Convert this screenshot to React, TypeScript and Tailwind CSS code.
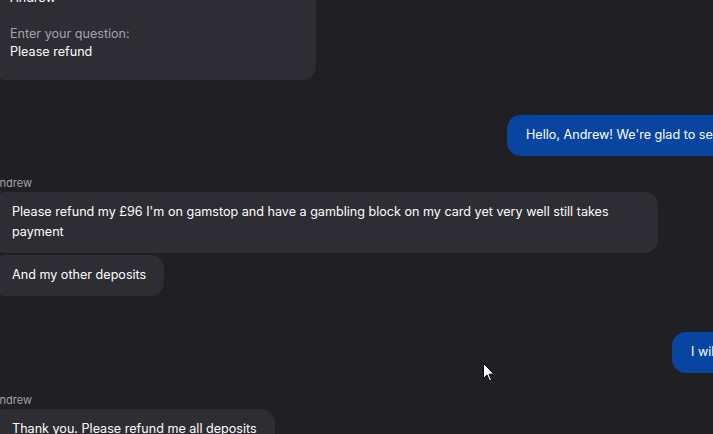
import React from 'react';

const font = { fontFamily: 'Inter, "Noto Sans", sans-serif' };

function Label({ name }: { name: string }) {
  return <div className="text-[11px] leading-[14px] text-[#a1a1aa] mb-[2px]">{name}</div>;
}

function Bubble({ children, className = '' }: { children: React.ReactNode; className?: string }) {
  return (
    <div className={`bg-[#2e2d33] text-white text-[12.6px] leading-[20px] pl-[20px] pr-[18px] pt-[10px] pb-[11px] rounded-[14px] ${className}`}>
      {children}
    </div>
  );
}

function Outgoing({ text, width, shift }: { text: string; width: string; shift: string }) {
  return (
    <div className="flex justify-end">
      <div
        className={`bg-[#0745a0] text-white text-[12.6px] leading-[20px] px-[19px] pt-[10px] pb-[11px] rounded-[14px] whitespace-nowrap overflow-hidden shrink-0 ${width} ${shift}`}
      >
        {text}
      </div>
    </div>
  );
}

export default function App() {
  return (
    <div className="relative w-[713px] h-[434px] overflow-hidden bg-[#202024]" style={font}>
      <div className="flex flex-col -ml-[8px]">
        {/* form card */}
        <div className="w-[324px] -mt-[23px] bg-[#2e2d33] rounded-br-[14px] rounded-bl-[14px] pl-[18px] pt-[12px] pb-[19px] text-[12.6px] leading-[18px]">
          <div className="text-white">Andrew</div>
          <div className="h-[18px]" />
          <div className="text-[#a3a3ad]">Enter your question:</div>
          <div className="text-white">Please refund</div>
        </div>

        <div className="mt-[35px]">
          <Outgoing
            text="Hello, Andrew! We're glad to see you here. How can we help you today?"
            width="w-[260px]"
            shift="-mr-[54px]"
          />
        </div>

        <div className="mt-[20px]">
          <Label name="Andrew" />
          <div className="flex flex-col items-start gap-[2px]">
            <Bubble className="w-[666px]">
              Please refund my £96 I'm on gamstop and have a gambling block on my card yet very well still takes payment
            </Bubble>
            <Bubble>And my other deposits</Bubble>
          </div>
        </div>

        <div className="mt-[36px]">
          <Outgoing text="I will check it for you right away." width="w-[220px]" shift="-mr-[179px]" />
        </div>

        <div className="mt-[20px]">
          <Label name="Andrew" />
          <div className="flex">
            <Bubble>Thank you. Please refund me all deposits</Bubble>
          </div>
        </div>
      </div>

      {/* mouse pointer */}
      <svg className="absolute left-[483px] top-[363px]" width="12" height="19" viewBox="0 0 12 19">
        <path d="M0.5 0.5 L0.5 15.5 L4 12 L6.5 18 L8.5 17 L6 11.2 L11 11.2 Z" fill="#fff" stroke="#000" strokeWidth="1" />
      </svg>
    </div>
  );
}
